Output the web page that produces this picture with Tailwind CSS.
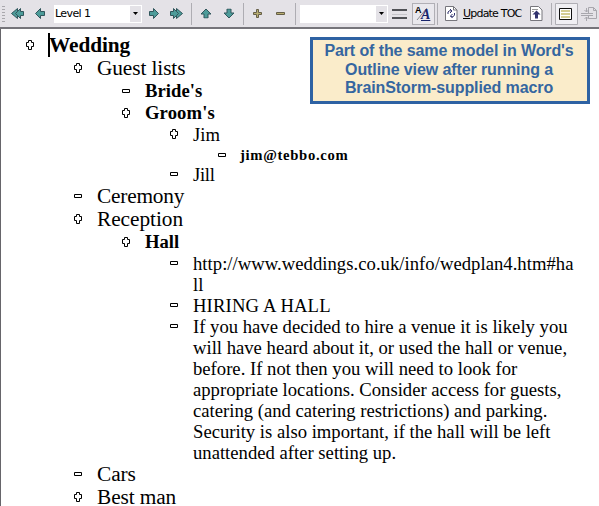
<!DOCTYPE html>
<html lang="en">
<head>
<meta charset="utf-8">
<title>Outline view</title>
<script src="https://cdn.jsdelivr.net/npm/@tailwindcss/browser@4"></script>
</head>
<body class="w-[599px] h-[506px] overflow-hidden bg-white text-black relative">
<svg class="hidden">
  <symbol id="plus" viewBox="0 0 8 10"><path d="M2.5 .5h3v2h2v4h-2v3h-3v-3h-2v-4h2z" fill="#fff" stroke="#000"/></symbol>
  <symbol id="minus" viewBox="0 0 8 10"><path d="M.5 3.5h7v3h-7z" fill="#fff" stroke="#000"/></symbol>
  <symbol id="arrow" viewBox="0 0 10 11"><path d="M.5 3.5h4v-3l5 5-5 5v-3h-4z" fill="#4d9c9a" stroke="#31565c"/></symbol>
  <symbol id="double" viewBox="0 0 13 11"><path d="M.5 3.5h3v-3l3 3v-3l6 5-6 5v-3l-3 3v-3h-3z" fill="#4d9c9a" stroke="#31565c"/><path d="M6.500 3.500l2 2-2 2" fill="none" stroke="#31565c"/></symbol>
</svg>
<header class="h-[29px] flex items-start bg-[#e4e2e7] border-b-2 border-[#75747a] font-[Roboto,sans-serif]">
  <div class="flex w-full h-[27px] items-center">
    <div class="ml-[2px] w-[3px] h-[16px] bg-[repeating-linear-gradient(#a9a8ad_0_1px,#e4e2e7_1px_3px)]"></div>
    <svg class="ml-[6px] w-[13px] h-[11px] rotate-180"><use href="#double"/></svg>
    <svg class="ml-[11px] w-[10px] h-[11px] rotate-180"><use href="#arrow"/></svg>
    <div class="ml-[9px] w-[88px] h-[18px] bg-white flex items-center justify-between p-px">
      <span class="text-[11px] leading-4 font-[DejaVu_Sans,sans-serif] tracking-[-0.6px] whitespace-nowrap">Level 1</span>
      <span class="w-[11px] h-full bg-[#e4e2e7] flex items-center justify-center"><svg class="w-[5px] h-[3px]"><path d="M0 0h5L2.500 3z"/></svg></span>
    </div>
    <svg class="ml-[7px] w-[10px] h-[11px]"><use href="#arrow"/></svg>
    <svg class="ml-[11px] w-[13px] h-[11px]"><use href="#double"/></svg>
    <div class="ml-[8px] w-px h-[22px] bg-[#aeadb3]"></div>
    <svg class="ml-[9px] w-[10px] h-[11px] -rotate-90"><use href="#arrow"/></svg>
    <svg class="ml-[13px] w-[10px] h-[11px] rotate-90"><use href="#arrow"/></svg>
    <div class="ml-[9px] w-px h-[22px] bg-[#aeadb3]"></div>
    <svg class="ml-[9px] w-[10px] h-[10px]"><path d="M3.500.5h2v3h3v2h-3v3h-2v-3h-3v-2h3z" fill="#b8ad70" stroke="#655f48"/></svg>
    <svg class="ml-[13px] w-[10px] h-[10px]"><path d="M.5 3.500h8v2h-8z" fill="#b8ad70" stroke="#655f48"/></svg>
    <div class="ml-[9px] w-px h-[22px] bg-[#aeadb3]"></div>
    <div class="ml-[4px] w-[88px] h-[18px] bg-white flex justify-end p-px">
      <span class="w-[11px] h-full bg-[#e4e2e7] flex items-center justify-center"><svg class="w-[5px] h-[3px]"><path d="M0 0h5L2.500 3z"/></svg></span>
    </div>
    <svg class="ml-[4px] w-[15px] h-[12px]"><path d="M0 2h15M0 10h15" stroke="#505156" stroke-width="2"/><path d="M0 6.500h15" stroke="#c6c5ca"/></svg>
    <div class="ml-[5px] w-[23px] h-[22px] border border-[#b0afb5] bg-[#e9e8ed] relative">
      <svg class="absolute inset-0 w-[20px] h-[20px]"><path d="M4 16L14 4" stroke="#8c8b91"/></svg>
      <span class="absolute left-[2px] top-[2px] text-[9px] leading-[9px] font-[Liberation_Sans,sans-serif] font-bold">A</span>
      <span class="absolute left-[8px] top-[4px] text-[14px] leading-[14px] font-bold italic underline text-[#18246c] font-[Liberation_Serif,serif]">A</span>
    </div>
    <div class="ml-[2px] w-px h-[22px] bg-[#aeadb3]"></div>
    <svg class="ml-[7px] w-[13px] h-[15px] shrink-0"><path d="M.5.5h8l3.500 3.500v10.500H.5z" fill="#fff" stroke="#77767d"/><path d="M8.500.5V4H12" fill="none" stroke="#77767d"/><path d="M3 8V6q1-2 4-1M5 3l2 2-2 2M9.500 7v2q-1 3-4 1.500M7.500 12l-2-2 2-2" fill="none" stroke="#31336e"/></svg>
    <span class="ml-[5px] w-[59px] shrink-0 text-[11px] leading-4 font-[DejaVu_Sans,sans-serif] tracking-[-0.8px] whitespace-nowrap"><u>U</u>pdate TOC</span>
    <svg class="ml-[8px] w-[13px] h-[15px] shrink-0"><path d="M.5.5h8l3.500 3.500v10.500H.5z" fill="#fff" stroke="#77767d"/><path d="M2 3.500h6M2 5.500h2" stroke="#999"/><path d="M6.500 4.500l4 4h-2.500v4h-3v-4H2.500z" fill="#31336e"/></svg>
    <div class="ml-[8px] w-px h-[22px] shrink-0 bg-[#aeadb3]"></div>
    <svg class="ml-[3px] w-[23px] h-[22px] shrink-0"><path d="M.5.5h22v21H.5z" fill="#f0eff3" stroke="#b0afb5"/><path d="M4.500 5.500h12v11h-12z" fill="#fff" stroke="#111"/><path d="M6 8h9M6 11h9M6 14h9" stroke="#d4cd94" stroke-width="2"/></svg>
    <svg class="ml-[3px] w-[16px] h-[16px] shrink-0 fill-none stroke-[#a8a7ad]"><path d="M7.500 7v-5.500h5l3 3v8h-8V10M12.500 1.500v3h3M0 7.500h12M0 9.500h12M5.500 2v4M3.500 4l2 2 2-2M5.500 15v-4M3.500 13l2-2 2 2"/></svg>
  </div>
</header>

<main class="h-[477px] border-l border-[#66656a] pl-[25px] pt-[5px] font-[Liberation_Serif,serif] text-[18.67px] leading-[21px] whitespace-nowrap">
  <div class="flex h-[23px] leading-[23px] text-[21.33px] font-bold"><svg class="mt-[6px] mr-[14px] w-[8px] h-[10px]"><use href="#plus"/></svg><span class="border-l-2 border-black -mt-px h-[24px] pt-px -indent-px tracking-[-0.1px]">Wedding</span></div>
  <div class="flex h-[23px] leading-[23px] text-[21.33px] pl-[48px]"><svg class="mt-[6px] mr-[15px] w-[8px] h-[10px]"><use href="#plus"/></svg><span class="tracking-[-0.1px]">Guest lists</span></div>
  <div class="flex h-[22px] leading-[22px] font-bold pl-[96px]"><svg class="mt-[6px] mr-[15px] w-[8px] h-[10px]"><use href="#minus"/></svg><span class="tracking-[0.05px]">Bride's</span></div>
  <div class="flex h-[22px] leading-[22px] font-bold pl-[96px]"><svg class="mt-[6px] mr-[15px] w-[8px] h-[10px]"><use href="#plus"/></svg><span class="tracking-[0.1px]">Groom's</span></div>
  <div class="flex h-[21px] pl-[144px]"><svg class="mt-[5px] mr-[15px] w-[8px] h-[10px]"><use href="#plus"/></svg><span>Jim</span></div>
  <div class="flex h-[19px] leading-[20px] text-[14.67px] font-bold pl-[192px]"><svg class="mt-[5px] mr-[14px] w-[8px] h-[10px]"><use href="#minus"/></svg><span class="tracking-[0.68px]">jim@tebbo.com</span></div>
  <div class="flex h-[21px] pl-[144px]"><svg class="mt-[5px] mr-[15px] w-[8px] h-[10px]"><use href="#minus"/></svg><span class="tracking-[-0.3px]">Jill</span></div>
  <div class="flex h-[23px] leading-[23px] text-[21.33px] pl-[48px]"><svg class="mt-[6px] mr-[15px] w-[8px] h-[10px]"><use href="#minus"/></svg><span class="tracking-[-0.2px]">Ceremony</span></div>
  <div class="flex h-[23px] leading-[23px] text-[21.33px] pl-[48px]"><svg class="mt-[6px] mr-[15px] w-[8px] h-[10px]"><use href="#plus"/></svg><span class="tracking-[-0.05px]">Reception</span></div>
  <div class="flex h-[22px] leading-[22px] font-bold pl-[96px]"><svg class="mt-[6px] mr-[15px] w-[8px] h-[10px]"><use href="#plus"/></svg><span>Hall</span></div>
  <div class="flex h-[42px] pl-[144px]"><svg class="mt-[5px] mr-[15px] w-[8px] h-[10px]"><use href="#minus"/></svg><span class="tracking-[0.03px]">http://www.weddings.co.uk/info/wedplan4.htm#ha<br>ll</span></div>
  <div class="flex h-[21px] pl-[144px]"><svg class="mt-[5px] mr-[15px] w-[8px] h-[10px]"><use href="#minus"/></svg><span class="tracking-[0.15px]">HIRING A HALL</span></div>
  <div class="flex h-[147px] pl-[144px]"><svg class="mt-[5px] mr-[15px] w-[8px] h-[10px]"><use href="#minus"/></svg><div><div>If you have decided to hire a venue it is likely you</div><div>will have heard about it, or used the hall or venue,</div><div>before. If not then you will need to look for</div><div>appropriate locations. Consider access for guests,</div><div>catering (and catering restrictions) and parking.</div><div>Security is also important, if the hall will be left</div><div>unattended after setting up.</div></div></div>
  <div class="flex h-[23px] leading-[23px] text-[21.33px] pl-[48px]"><svg class="mt-[6px] mr-[15px] w-[8px] h-[10px]"><use href="#minus"/></svg><span class="tracking-[-0.1px]">Cars</span></div>
  <div class="flex h-[20px] leading-[23px] text-[21.33px] pl-[48px]"><svg class="mt-[6px] mr-[15px] w-[8px] h-[10px]"><use href="#plus"/></svg><span class="tracking-[-0.1px]">Best man</span></div>
</main>

<aside class="absolute left-[310px] top-[37px] w-[280px] h-[67px] border-[3px] border-[#2e62a3] bg-[#faecca] text-[#3566a0] font-[Liberation_Sans,sans-serif] font-bold text-[16px] leading-[18.500px] tracking-[-0.1px] text-center whitespace-nowrap pt-[2px] pr-[2px]">
  <div>Part of the same model in Word's</div><div>Outline view after running a</div><div>BrainStorm-supplied macro</div>
</aside>
</body>
</html>
